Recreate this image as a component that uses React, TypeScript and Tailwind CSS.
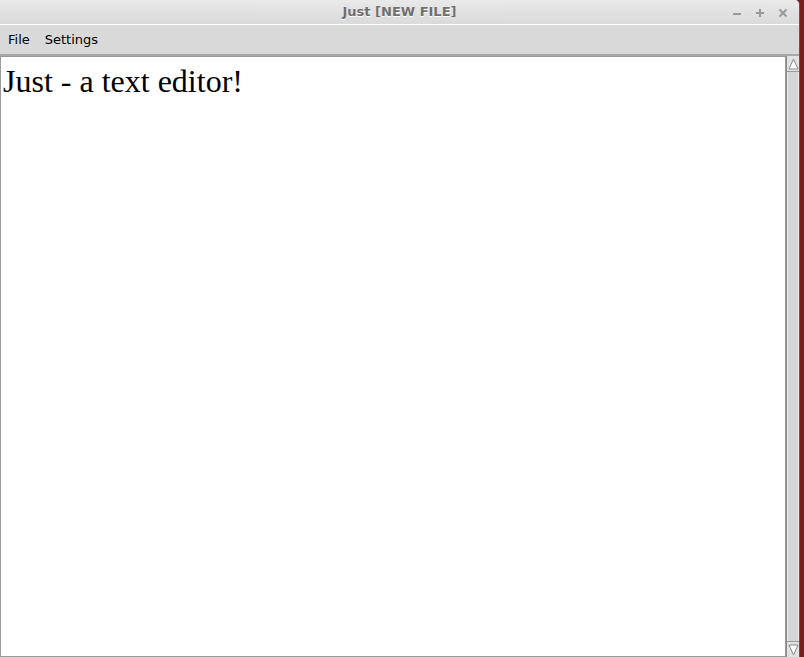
export default function App() {
  return (
    <div className="flex h-[657px] w-[804px] bg-[#7a1c1c] overflow-hidden">
      <div className="flex w-[800px] flex-col overflow-hidden rounded-tr-[5px] bg-[#d9d9d9] border-r border-[#5a5a5a]">
        {/* title bar */}
        <div className="relative flex h-[25px] shrink-0 items-center justify-center border-b border-white bg-gradient-to-b from-[#e9e9e9] to-[#dadada]">
          <span className="font-['DejaVu_Sans',sans-serif] text-[13px] font-bold text-[#707070] [text-shadow:0_1px_0_#ffffff]">
            Just [NEW FILE]
          </span>
          <div className="absolute right-[11px] top-[8px] flex items-center gap-[13px]">
            <svg width="10" height="10" viewBox="0 0 10 10">
              <path d="M1 6 H9" stroke="#9a9a9a" strokeWidth="2" />
            </svg>
            <svg width="10" height="10" viewBox="0 0 10 10">
              <path d="M1 5 H9 M5 1 V9" stroke="#9a9a9a" strokeWidth="2" />
            </svg>
            <svg width="10" height="10" viewBox="0 0 10 10">
              <path d="M1.5 1.5 L8.5 8.5 M8.5 1.5 L1.5 8.5" stroke="#9a9a9a" strokeWidth="2" />
            </svg>
          </div>
        </div>

        {/* menu bar */}
        <div className="flex h-[31px] shrink-0 items-center gap-[15px] border-b-2 border-[#a8a8a8] bg-[#d9d9d9] pl-[8px] font-['DejaVu_Sans',sans-serif] text-[13px] text-black">
          <span>File</span>
          <span>Settings</span>
        </div>

        {/* editor area */}
        <div className="flex min-h-0 flex-1">
          <div className="flex-1 border border-[#9a9a9a] bg-white">
            <div className="pl-[2px] pt-[4px] font-['Liberation_Serif',serif] text-[32px] leading-[40px] text-black">
              Just - a text editor!
            </div>
          </div>
          <div className="flex w-[13px] flex-col border-l border-[#8a8a8a] bg-[#d6d6d6]">
            <div className="flex h-[16px] items-center justify-center border-b border-[#9a9a9a] bg-[#e2e2e2]">
              <svg width="11" height="12" viewBox="0 0 11 12">
                <path d="M5.5 1 L10 11 L1 11 Z" fill="#ffffff" stroke="#8a8a8a" strokeWidth="1" />
              </svg>
            </div>
            <div className="flex-1 border-x border-[#ececec]" />
            <div className="flex h-[16px] items-center justify-center border-t border-[#9a9a9a] bg-[#e2e2e2]">
              <svg width="11" height="12" viewBox="0 0 11 12">
                <path d="M5.5 11 L10 1 L1 1 Z" fill="#ffffff" stroke="#8a8a8a" strokeWidth="1" />
              </svg>
            </div>
          </div>
        </div>
      </div>
      <div className="w-[4px] bg-[#7a1c1c]" />
    </div>
  );
}
